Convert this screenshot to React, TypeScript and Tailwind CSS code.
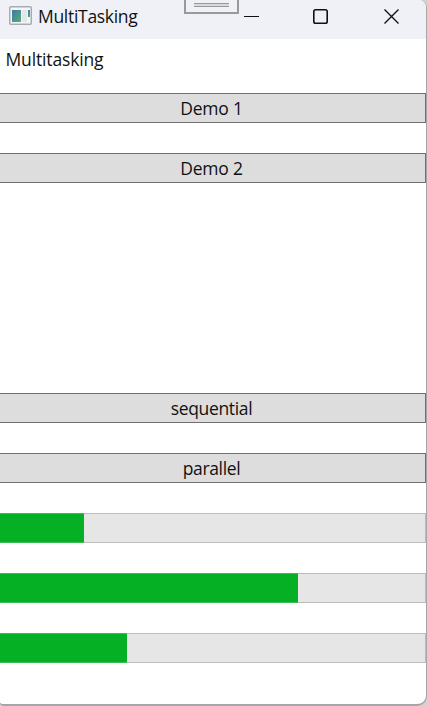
import React from "react";

function DemoButton({ label, spacing }: { label: string; spacing: string }) {
  return (
    <button className="flex h-[30px] w-full items-center justify-center border border-l-0 border-[#707070] bg-[#dddddd] pt-px pr-[2px] leading-none">
      <span className={spacing}>{label}</span>
    </button>
  );
}

function ProgressBar({ value }: { value: number }) {
  return (
    <div className="h-[30px] w-full border border-l-0 border-[#bcbcbc] bg-[#e6e6e6]">
      <div className="-my-px h-[30px] border-y border-[#3dbb54] bg-[#06b025]" style={{ width: `${value}px` }} />
    </div>
  );
}

function AppIcon() {
  return (
    <svg className="mt-1.5 ml-[9px] h-[19px] w-[23px] shrink-0" viewBox="0 0 23 19">
      <defs>
        <linearGradient id="pane" x1="0" y1="0" x2="1" y2="1">
          <stop offset="0" stopColor="#3f78a8" />
          <stop offset="1" stopColor="#55ad78" />
        </linearGradient>
      </defs>
      <rect x="0.75" y="0.75" width="21.5" height="17.5" rx="1" fill="#f4f5f6" stroke="#a9adb2" strokeWidth="1.5" />
      <rect x="3" y="4" width="9" height="12" fill="url(#pane)" />
      <rect x="13" y="4" width="5" height="12" fill="#e4e6e8" />
      <rect x="19" y="4" width="2" height="7" fill="url(#pane)" />
    </svg>
  );
}

export default function App() {
  return (
    <div className="h-[706px] w-[427px] overflow-hidden bg-[#d2d2d2] font-['Open_Sans','Noto_Sans',sans-serif] text-[17.5px] text-[#111]">
      <div className="relative h-[706px] w-[427px] overflow-hidden rounded-tr-lg rounded-br-[10px] rounded-bl-[4px] border-r border-b-2 border-[#a6a6a6] bg-white">
        <header className="flex h-[39px] bg-[#f0f1f7]">
          <AppIcon />
          <span className="mt-[4px] ml-1.5 w-[120px] whitespace-nowrap leading-6 tracking-[-0.3px]">MultiTasking</span>
          <svg className="ml-auto h-[39px] w-[200px]" viewBox="226 0 200 39" fill="none" stroke="#111">
            <path d="M244 16.5H259" />
            <rect x="313.8" y="9.8" width="13.4" height="13.4" rx="1.8" strokeWidth="1.6" />
            <path d="M384.5 9.5L398.5 23.5M398.5 9.5L384.5 23.5" strokeWidth="1.4" />
          </svg>
        </header>
        <div className="absolute top-0 left-[184px] h-[14px] w-[55px] border-2 border-t-0 border-[#999] px-2 pt-[3px]">
          <div className="h-1 border-y border-[#999] bg-[#d9d9d9]" />
        </div>
        <main>
          <div className="h-[54px] pt-2 pl-[5.5px] leading-6 tracking-[-0.15px]">Multitasking</div>
          <div className="flex flex-col gap-[30px]">
            <DemoButton label="Demo 1" spacing="tracking-[-0.25px]" />
            <DemoButton label="Demo 2" spacing="tracking-[-0.25px]" />
          </div>
          <div className="mt-[210px] flex flex-col gap-[30px]">
            <DemoButton label="sequential" spacing="tracking-[-0.35px]" />
            <DemoButton label="parallel" spacing="tracking-[-0.35px]" />
            <ProgressBar value={83.5} />
            <ProgressBar value={297.5} />
            <ProgressBar value={126.5} />
          </div>
        </main>
      </div>
    </div>
  );
}
